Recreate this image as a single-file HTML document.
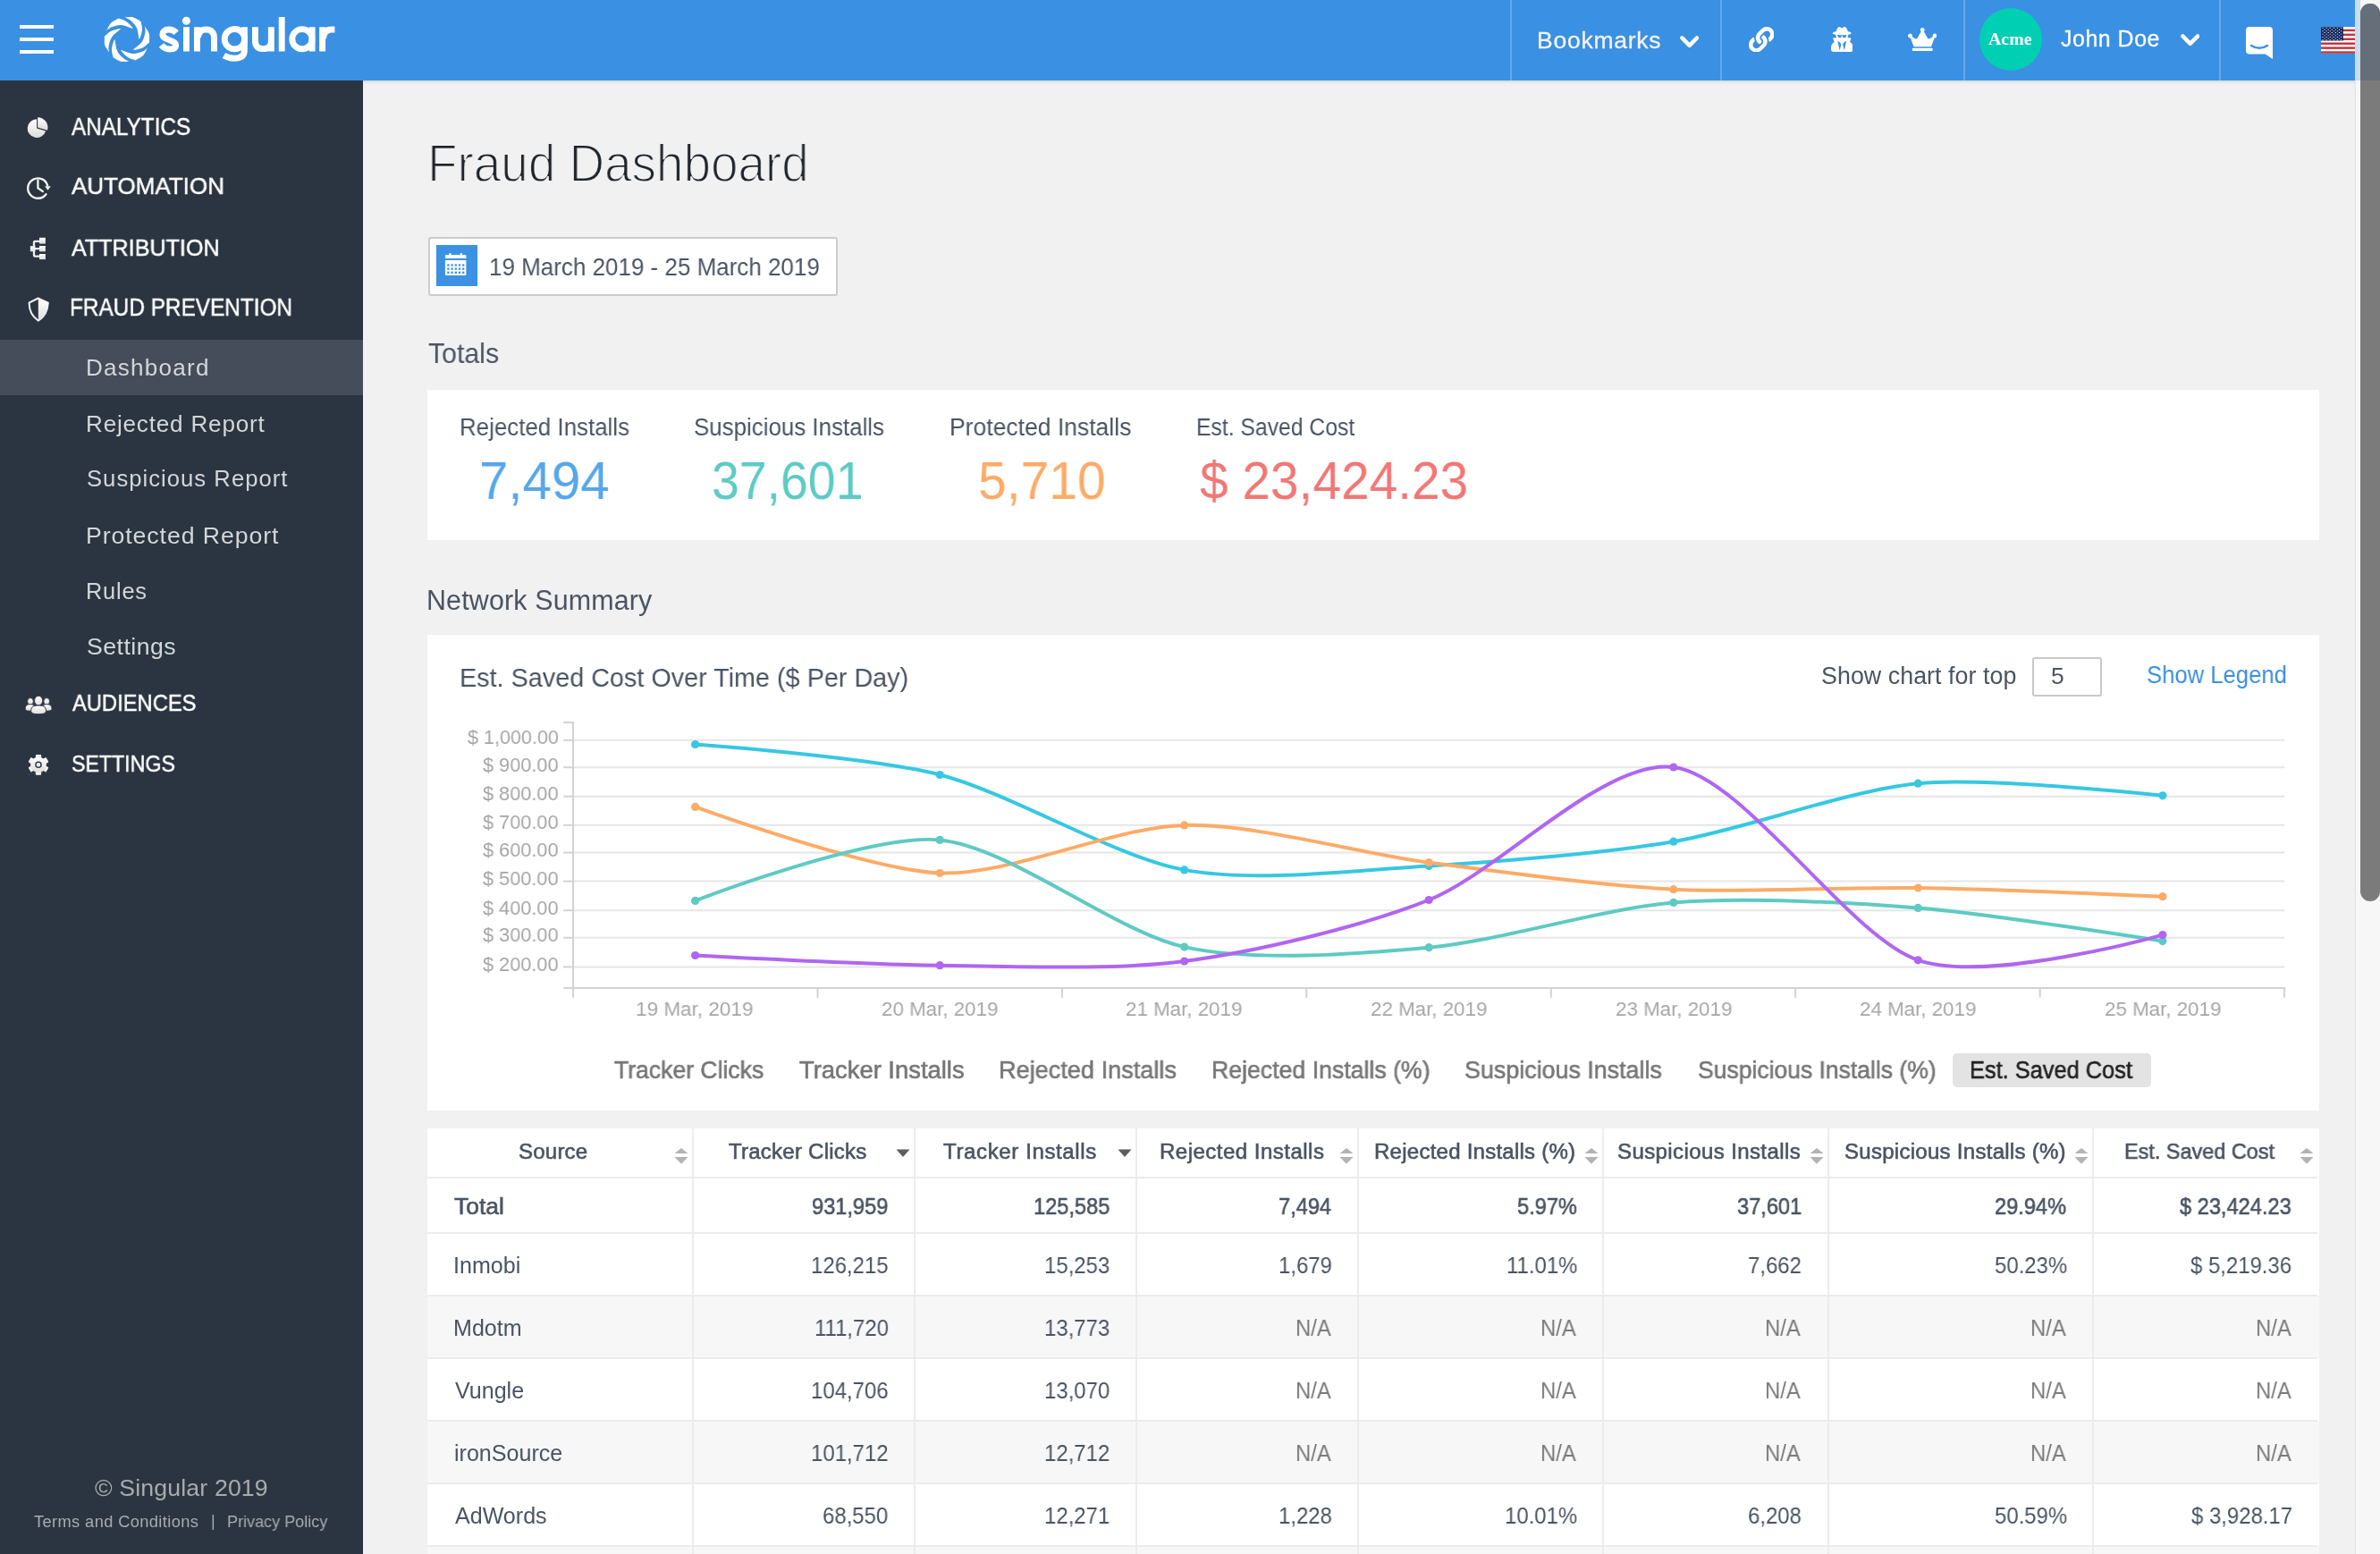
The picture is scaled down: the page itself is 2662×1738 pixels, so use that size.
<!DOCTYPE html>
<html><head><meta charset="utf-8"><title>Fraud Dashboard</title>
<style>
html,body{margin:0;padding:0}
body{width:2662px;height:1738px;overflow:hidden;position:relative;background:#f1f1f1;font-family:"Liberation Sans",sans-serif}
.abs{position:absolute}
.t{position:absolute;white-space:pre;line-height:normal;will-change:transform}
html{overflow:hidden}
</style></head><body>
<!-- header -->
<div class="abs" style="left:0;top:0;width:2634px;height:90px;background:#3a90e2"></div>
<div class="abs" style="left:0;top:90px;width:2634px;height:4px;background:linear-gradient(rgba(0,0,0,0.1),rgba(0,0,0,0))"></div>
<div class="abs" style="left:1689px;top:0;width:2px;height:90px;background:#67a9ea"></div>
<div class="abs" style="left:1924px;top:0;width:2px;height:90px;background:#67a9ea"></div>
<div class="abs" style="left:2196px;top:0;width:2px;height:90px;background:#67a9ea"></div>
<div class="abs" style="left:2482px;top:0;width:2px;height:90px;background:#67a9ea"></div>
<!-- sidebar -->
<div class="abs" style="left:0;top:90px;width:406px;height:1648px;background:#2a3541"></div>
<div class="abs" style="left:0;top:380px;width:406px;height:62px;background:#464d5a"></div>
<!-- date box -->
<div class="abs" style="left:479px;top:265px;width:454px;height:62px;background:#fff;border:2px solid #cccccc;border-radius:3px"></div>
<!-- totals card -->
<div class="abs" style="left:478px;top:436px;width:2116px;height:168px;background:#fff"></div>
<!-- chart card -->
<div class="abs" style="left:478px;top:710px;width:2116px;height:532px;background:#fff"></div>
<div class="abs" style="left:2273px;top:735px;width:74px;height:40px;border:2px solid #c8c8c8;border-radius:3px;background:#fff"></div>
<div class="abs" style="left:2184px;top:1178px;width:222px;height:37.5px;background:#e3e3e3;border-radius:5px"></div>
<svg width="2662" height="1738" style="position:absolute;left:0;top:0">
<line x1="641" y1="827.8" x2="2555.2" y2="827.8" stroke="#e6e6e6" stroke-width="2"/>
<line x1="630.2" y1="827.8" x2="641" y2="827.8" stroke="#d3d3d3" stroke-width="2"/>
<line x1="641" y1="858.2" x2="2555.2" y2="858.2" stroke="#e6e6e6" stroke-width="2"/>
<line x1="630.2" y1="858.2" x2="641" y2="858.2" stroke="#d3d3d3" stroke-width="2"/>
<line x1="641" y1="890.7" x2="2555.2" y2="890.7" stroke="#e6e6e6" stroke-width="2"/>
<line x1="630.2" y1="890.7" x2="641" y2="890.7" stroke="#d3d3d3" stroke-width="2"/>
<line x1="641" y1="922.8" x2="2555.2" y2="922.8" stroke="#e6e6e6" stroke-width="2"/>
<line x1="630.2" y1="922.8" x2="641" y2="922.8" stroke="#d3d3d3" stroke-width="2"/>
<line x1="641" y1="953.6" x2="2555.2" y2="953.6" stroke="#e6e6e6" stroke-width="2"/>
<line x1="630.2" y1="953.6" x2="641" y2="953.6" stroke="#d3d3d3" stroke-width="2"/>
<line x1="641" y1="985.6" x2="2555.2" y2="985.6" stroke="#e6e6e6" stroke-width="2"/>
<line x1="630.2" y1="985.6" x2="641" y2="985.6" stroke="#d3d3d3" stroke-width="2"/>
<line x1="641" y1="1018.2" x2="2555.2" y2="1018.2" stroke="#e6e6e6" stroke-width="2"/>
<line x1="630.2" y1="1018.2" x2="641" y2="1018.2" stroke="#d3d3d3" stroke-width="2"/>
<line x1="641" y1="1048.8" x2="2555.2" y2="1048.8" stroke="#e6e6e6" stroke-width="2"/>
<line x1="630.2" y1="1048.8" x2="641" y2="1048.8" stroke="#d3d3d3" stroke-width="2"/>
<line x1="641" y1="1081.4" x2="2555.2" y2="1081.4" stroke="#e6e6e6" stroke-width="2"/>
<line x1="630.2" y1="1081.4" x2="641" y2="1081.4" stroke="#d3d3d3" stroke-width="2"/>
<line x1="630.2" y1="808" x2="642" y2="808" stroke="#d3d3d3" stroke-width="2"/>
<line x1="641" y1="807" x2="641" y2="1115.8" stroke="#d3d3d3" stroke-width="2"/>
<line x1="630.2" y1="1104.9" x2="2556.2" y2="1104.9" stroke="#d3d3d3" stroke-width="2"/>
<line x1="914.5" y1="1104.9" x2="914.5" y2="1115.8" stroke="#d3d3d3" stroke-width="2"/>
<line x1="1187.9" y1="1104.9" x2="1187.9" y2="1115.8" stroke="#d3d3d3" stroke-width="2"/>
<line x1="1461.3" y1="1104.9" x2="1461.3" y2="1115.8" stroke="#d3d3d3" stroke-width="2"/>
<line x1="1734.8" y1="1104.9" x2="1734.8" y2="1115.8" stroke="#d3d3d3" stroke-width="2"/>
<line x1="2008.2" y1="1104.9" x2="2008.2" y2="1115.8" stroke="#d3d3d3" stroke-width="2"/>
<line x1="2281.7" y1="1104.9" x2="2281.7" y2="1115.8" stroke="#d3d3d3" stroke-width="2"/>
<line x1="2555.1" y1="1104.9" x2="2555.1" y2="1115.8" stroke="#d3d3d3" stroke-width="2"/>
<path d="M 777.60 832.50 C 777.60 832.50 972.99 846.44 1051.15 866.50 C 1129.31 886.56 1246.54 958.33 1324.70 972.90 C 1402.86 987.47 1520.09 973.03 1598.25 968.50 C 1676.41 963.97 1793.64 954.39 1871.80 941.20 C 1949.96 928.01 2067.19 883.54 2145.35 876.20 C 2223.51 868.86 2418.90 889.80 2418.90 889.80" fill="none" stroke="#36c8e2" stroke-width="4" stroke-linecap="round" stroke-linejoin="round"/>
<path d="M 777.60 902.40 C 777.60 902.40 972.99 973.57 1051.15 976.50 C 1129.31 979.43 1246.54 924.59 1324.70 922.90 C 1402.86 921.21 1520.09 954.44 1598.25 964.70 C 1676.41 974.96 1793.64 990.66 1871.80 994.70 C 1949.96 998.74 2067.19 991.86 2145.35 993.00 C 2223.51 994.14 2418.90 1002.70 2418.90 1002.70" fill="none" stroke="#fdab66" stroke-width="4" stroke-linecap="round" stroke-linejoin="round"/>
<path d="M 777.60 1007.40 C 777.60 1007.40 972.99 932.01 1051.15 939.40 C 1129.31 946.79 1246.54 1041.91 1324.70 1059.10 C 1402.86 1076.29 1520.09 1066.80 1598.25 1059.70 C 1676.41 1052.60 1793.64 1015.73 1871.80 1009.40 C 1949.96 1003.07 2067.19 1009.23 2145.35 1015.40 C 2223.51 1021.57 2418.90 1052.60 2418.90 1052.60" fill="none" stroke="#5ecac3" stroke-width="4" stroke-linecap="round" stroke-linejoin="round"/>
<path d="M 777.60 1068.50 C 777.60 1068.50 972.99 1078.77 1051.15 1079.70 C 1129.31 1080.63 1246.54 1085.46 1324.70 1075.00 C 1402.86 1064.54 1520.09 1037.50 1598.25 1006.50 C 1676.41 975.50 1793.64 848.39 1871.80 858.00 C 1949.96 867.61 2067.19 1047.00 2145.35 1073.80 C 2223.51 1100.60 2418.90 1045.60 2418.90 1045.60" fill="none" stroke="#b066f1" stroke-width="4" stroke-linecap="round" stroke-linejoin="round"/>
<circle cx="777.6" cy="832.5" r="4.6" fill="#36c8e2"/>
<circle cx="1051.2" cy="866.5" r="4.6" fill="#36c8e2"/>
<circle cx="1324.7" cy="972.9" r="4.6" fill="#36c8e2"/>
<circle cx="1598.2" cy="968.5" r="4.6" fill="#36c8e2"/>
<circle cx="1871.8" cy="941.2" r="4.6" fill="#36c8e2"/>
<circle cx="2145.3" cy="876.2" r="4.6" fill="#36c8e2"/>
<circle cx="2418.9" cy="889.8" r="4.6" fill="#36c8e2"/>
<circle cx="777.6" cy="902.4" r="4.6" fill="#fdab66"/>
<circle cx="1051.2" cy="976.5" r="4.6" fill="#fdab66"/>
<circle cx="1324.7" cy="922.9" r="4.6" fill="#fdab66"/>
<circle cx="1598.2" cy="964.7" r="4.6" fill="#fdab66"/>
<circle cx="1871.8" cy="994.7" r="4.6" fill="#fdab66"/>
<circle cx="2145.3" cy="993.0" r="4.6" fill="#fdab66"/>
<circle cx="2418.9" cy="1002.7" r="4.6" fill="#fdab66"/>
<circle cx="777.6" cy="1007.4" r="4.6" fill="#5ecac3"/>
<circle cx="1051.2" cy="939.4" r="4.6" fill="#5ecac3"/>
<circle cx="1324.7" cy="1059.1" r="4.6" fill="#5ecac3"/>
<circle cx="1598.2" cy="1059.7" r="4.6" fill="#5ecac3"/>
<circle cx="1871.8" cy="1009.4" r="4.6" fill="#5ecac3"/>
<circle cx="2145.3" cy="1015.4" r="4.6" fill="#5ecac3"/>
<circle cx="2418.9" cy="1052.6" r="4.6" fill="#5ecac3"/>
<circle cx="777.6" cy="1068.5" r="4.6" fill="#b066f1"/>
<circle cx="1051.2" cy="1079.7" r="4.6" fill="#b066f1"/>
<circle cx="1324.7" cy="1075.0" r="4.6" fill="#b066f1"/>
<circle cx="1598.2" cy="1006.5" r="4.6" fill="#b066f1"/>
<circle cx="1871.8" cy="858.0" r="4.6" fill="#b066f1"/>
<circle cx="2145.3" cy="1073.8" r="4.6" fill="#b066f1"/>
<circle cx="2418.9" cy="1045.6" r="4.6" fill="#b066f1"/>
</svg>
<div class="abs" style="left:478px;top:1262px;width:2116px;height:476px;background:#fff"></div>
<div class="abs" style="left:478px;top:1449px;width:2116px;height:70px;background:#f7f7f7"></div>
<div class="abs" style="left:478px;top:1589px;width:2116px;height:70px;background:#f7f7f7"></div>
<div class="abs" style="left:478px;top:1729px;width:2116px;height:70px;background:#f7f7f7"></div>
<div class="abs" style="left:478px;top:1316px;width:2114px;height:2px;background:#ececec"></div>
<div class="abs" style="left:478px;top:1378px;width:2114px;height:2px;background:#ececec"></div>
<div class="abs" style="left:478px;top:1448px;width:2114px;height:2px;background:#ececec"></div>
<div class="abs" style="left:478px;top:1518px;width:2114px;height:2px;background:#ececec"></div>
<div class="abs" style="left:478px;top:1588px;width:2114px;height:2px;background:#ececec"></div>
<div class="abs" style="left:478px;top:1658px;width:2114px;height:2px;background:#ececec"></div>
<div class="abs" style="left:478px;top:1728px;width:2114px;height:2px;background:#ececec"></div>
<div class="abs" style="left:773.6px;top:1262px;width:2px;height:476px;background:#ececec"></div>
<div class="abs" style="left:1021.9px;top:1262px;width:2px;height:476px;background:#ececec"></div>
<div class="abs" style="left:1269.9px;top:1262px;width:2px;height:476px;background:#ececec"></div>
<div class="abs" style="left:1518.3px;top:1262px;width:2px;height:476px;background:#ececec"></div>
<div class="abs" style="left:1792.3px;top:1262px;width:2px;height:476px;background:#ececec"></div>
<div class="abs" style="left:2044.0px;top:1262px;width:2px;height:476px;background:#ececec"></div>
<div class="abs" style="left:2339.8px;top:1262px;width:2px;height:476px;background:#ececec"></div>
<svg class="abs" style="left:754px;top:1284px" width="16" height="18"><path d="M8,0 L15.5,6 L0.5,6 Z M0.5,10 L15.5,10 L8,17.8 Z" fill="#b3b3b3"/></svg>
<svg class="abs" style="left:1002px;top:1284px" width="16" height="18"><path d="M0.5,1.5 L15.5,1.5 L8,10 Z" fill="#5d5d5d"/></svg>
<svg class="abs" style="left:1250px;top:1284px" width="16" height="18"><path d="M0.5,1.5 L15.5,1.5 L8,10 Z" fill="#5d5d5d"/></svg>
<svg class="abs" style="left:1498px;top:1284px" width="16" height="18"><path d="M8,0 L15.5,6 L0.5,6 Z M0.5,10 L15.5,10 L8,17.8 Z" fill="#b3b3b3"/></svg>
<svg class="abs" style="left:1772px;top:1284px" width="16" height="18"><path d="M8,0 L15.5,6 L0.5,6 Z M0.5,10 L15.5,10 L8,17.8 Z" fill="#b3b3b3"/></svg>
<svg class="abs" style="left:2024px;top:1284px" width="16" height="18"><path d="M8,0 L15.5,6 L0.5,6 Z M0.5,10 L15.5,10 L8,17.8 Z" fill="#b3b3b3"/></svg>
<svg class="abs" style="left:2320px;top:1284px" width="16" height="18"><path d="M8,0 L15.5,6 L0.5,6 Z M0.5,10 L15.5,10 L8,17.8 Z" fill="#b3b3b3"/></svg>
<svg class="abs" style="left:2572px;top:1284px" width="16" height="18"><path d="M8,0 L15.5,6 L0.5,6 Z M0.5,10 L15.5,10 L8,17.8 Z" fill="#b3b3b3"/></svg>

<svg class="abs" style="left:488px;top:274px" width="46" height="46" viewBox="488 274 46 46">
 <rect x="488" y="274" width="46" height="46" fill="#3b91e3"/>
 <path d="M499,285 L502.2,285 L502.2,283.5 Q503.4,282.3 504.6,283.5 L504.6,285 L514.7,285 L514.7,283.5 Q515.9,282.3 517.1,283.5 L517.1,285 L520.4,285 Q521.4,285 521.4,286 L521.4,289 L497.9,289 L497.9,286 Q497.9,285 499,285 Z" fill="#fff"/>
 <path d="M497.9,291 L521.4,291 L521.4,307 Q521.4,308 520.4,308 L499,308 Q497.9,308 497.9,307 Z" fill="#fff"/>
 <rect x="500.25" y="295.35" width="2.3" height="2.3" fill="#3b91e3"/><rect x="504.45" y="295.35" width="2.3" height="2.3" fill="#3b91e3"/><rect x="508.65" y="295.35" width="2.3" height="2.3" fill="#3b91e3"/><rect x="512.85" y="295.35" width="2.3" height="2.3" fill="#3b91e3"/><rect x="517.05" y="295.35" width="2.3" height="2.3" fill="#3b91e3"/><rect x="500.25" y="299.50" width="2.3" height="2.3" fill="#3b91e3"/><rect x="504.45" y="299.50" width="2.3" height="2.3" fill="#3b91e3"/><rect x="508.65" y="299.50" width="2.3" height="2.3" fill="#3b91e3"/><rect x="512.85" y="299.50" width="2.3" height="2.3" fill="#3b91e3"/><rect x="517.05" y="299.50" width="2.3" height="2.3" fill="#3b91e3"/><rect x="500.25" y="303.65" width="2.3" height="2.3" fill="#3b91e3"/><rect x="504.45" y="303.65" width="2.3" height="2.3" fill="#3b91e3"/><rect x="508.65" y="303.65" width="2.3" height="2.3" fill="#3b91e3"/><rect x="512.85" y="303.65" width="2.3" height="2.3" fill="#3b91e3"/><rect x="517.05" y="303.65" width="2.3" height="2.3" fill="#3b91e3"/>
</svg>


<!-- hamburger -->
<div class="abs" style="left:22px;top:28px;width:38px;height:4px;background:#fff"></div>
<div class="abs" style="left:22px;top:42px;width:38px;height:4px;background:#fff"></div>
<div class="abs" style="left:22px;top:56px;width:38px;height:4px;background:#fff"></div>
<svg width="60" height="60" viewBox="-30 -30 60 60" style="position:absolute;left:112.2px;top:13.9px"><path d="M-3.01,-24.52 C-1.40,-24.55 3.53,-25.49 6.63,-24.73 C9.72,-23.96 14.08,-20.74 15.58,-19.94 C15.81,-18.50 17.06,-14.10 16.99,-11.29 C16.93,-8.48 15.77,-4.97 15.19,-3.09 C14.61,-1.21 13.78,-0.52 13.50,-0.00 C13.02,-2.23 12.41,-9.73 10.62,-13.40 C8.84,-17.07 5.05,-20.17 2.78,-22.02 C0.51,-23.88 -2.04,-24.10 -3.01,-24.52 Z" fill="#fff" transform="rotate(0)"/><path d="M-3.01,-24.52 C-1.40,-24.55 3.53,-25.49 6.63,-24.73 C9.72,-23.96 14.08,-20.74 15.58,-19.94 C15.81,-18.50 17.06,-14.10 16.99,-11.29 C16.93,-8.48 15.77,-4.97 15.19,-3.09 C14.61,-1.21 13.78,-0.52 13.50,-0.00 C13.02,-2.23 12.41,-9.73 10.62,-13.40 C8.84,-17.07 5.05,-20.17 2.78,-22.02 C0.51,-23.88 -2.04,-24.10 -3.01,-24.52 Z" fill="#fff" transform="rotate(-60)"/><path d="M-3.01,-24.52 C-1.40,-24.55 3.53,-25.49 6.63,-24.73 C9.72,-23.96 14.08,-20.74 15.58,-19.94 C15.81,-18.50 17.06,-14.10 16.99,-11.29 C16.93,-8.48 15.77,-4.97 15.19,-3.09 C14.61,-1.21 13.78,-0.52 13.50,-0.00 C13.02,-2.23 12.41,-9.73 10.62,-13.40 C8.84,-17.07 5.05,-20.17 2.78,-22.02 C0.51,-23.88 -2.04,-24.10 -3.01,-24.52 Z" fill="#fff" transform="rotate(-120)"/><path d="M-3.01,-24.52 C-1.40,-24.55 3.53,-25.49 6.63,-24.73 C9.72,-23.96 14.08,-20.74 15.58,-19.94 C15.81,-18.50 17.06,-14.10 16.99,-11.29 C16.93,-8.48 15.77,-4.97 15.19,-3.09 C14.61,-1.21 13.78,-0.52 13.50,-0.00 C13.02,-2.23 12.41,-9.73 10.62,-13.40 C8.84,-17.07 5.05,-20.17 2.78,-22.02 C0.51,-23.88 -2.04,-24.10 -3.01,-24.52 Z" fill="#fff" transform="rotate(-180)"/><path d="M-3.01,-24.52 C-1.40,-24.55 3.53,-25.49 6.63,-24.73 C9.72,-23.96 14.08,-20.74 15.58,-19.94 C15.81,-18.50 17.06,-14.10 16.99,-11.29 C16.93,-8.48 15.77,-4.97 15.19,-3.09 C14.61,-1.21 13.78,-0.52 13.50,-0.00 C13.02,-2.23 12.41,-9.73 10.62,-13.40 C8.84,-17.07 5.05,-20.17 2.78,-22.02 C0.51,-23.88 -2.04,-24.10 -3.01,-24.52 Z" fill="#fff" transform="rotate(-240)"/><path d="M-3.01,-24.52 C-1.40,-24.55 3.53,-25.49 6.63,-24.73 C9.72,-23.96 14.08,-20.74 15.58,-19.94 C15.81,-18.50 17.06,-14.10 16.99,-11.29 C16.93,-8.48 15.77,-4.97 15.19,-3.09 C14.61,-1.21 13.78,-0.52 13.50,-0.00 C13.02,-2.23 12.41,-9.73 10.62,-13.40 C8.84,-17.07 5.05,-20.17 2.78,-22.02 C0.51,-23.88 -2.04,-24.10 -3.01,-24.52 Z" fill="#fff" transform="rotate(-300)"/></svg>
<svg class="abs" style="left:170px;top:10px" width="215" height="65" viewBox="170 10 215 65">
 <g fill="none" stroke="#fff" stroke-width="6.9" stroke-linecap="butt">
  <path d="M197.2,36.8 C194.8,34 191.8,33 188.6,33 C184.3,33 181.9,35.4 181.9,38.4 C181.9,41.8 184.8,43 189,44.6 C194,46.5 196.6,47.8 196.6,51 C196.6,54 193.6,55 189.6,55 C185.8,55 182.8,53.4 180.4,50.6"/>
  <path d="M208.45,30.2 L208.45,57.5"/>
  <path d="M220.45,30.2 L220.45,57.5 M221.5,42 C222,36 225,33 230.3,33 C235.8,33 239.5,36 239.5,42 L239.5,57.5"/>
  <circle cx="262.4" cy="43.7" r="11.2"/>
  <path d="M273.4,30.2 L273.4,56 C273.4,62.8 268.8,65.2 262.2,65.2 C257.4,65.2 253.6,64 250.4,62"/>
  <path d="M285.45,30.2 L285.45,46 C285.45,52 289,54.65 294.4,54.65 C299.8,54.65 303.35,52 303.35,46 L303.35,30.2 M303.35,40 L303.35,57.5"/>
  <path d="M315.2,19 L315.2,57.5"/>
  <circle cx="337.9" cy="43.7" r="11.1"/>
  <path d="M349.1,30.2 L349.1,57.5"/>
  <path d="M360.6,30.2 L360.6,57.5 M361.5,43 C362,36.2 365,33 370.8,33 L374.4,33"/>
 </g>
 <circle cx="208.4" cy="23.3" r="4.5" fill="#fff"/>
</svg>

<svg class="abs" style="left:1878.8px;top:39.8px" width="21.4" height="13.3" viewBox="0 0 21.4 13.3"><polyline points="2.5,2.5 10.7,10.8 18.9,2.5" fill="none" stroke="#fff" stroke-width="4.6" stroke-linecap="round" stroke-linejoin="round"/></svg>
<svg class="abs" style="left:2438.7px;top:37.7px" width="21.5" height="13.3" viewBox="0 0 21.5 13.3"><polyline points="2.5,2.5 10.75,10.8 19.0,2.5" fill="none" stroke="#fff" stroke-width="4.6" stroke-linecap="round" stroke-linejoin="round"/></svg>
<!-- link -->
<svg class="abs" style="left:1955.5px;top:29.7px" width="28.6" height="28.6" viewBox="0 0 512 512">
 <path fill="#fff" d="M326.612 185.391c59.747 59.809 58.927 155.698.36 214.59-.11.12-.24.25-.36.37l-67.2 67.2c-59.27 59.27-155.699 59.262-214.96 0-59.27-59.26-59.27-155.7 0-214.96l37.106-37.106c9.84-9.84 26.786-3.3 27.294 10.606.648 17.722 3.826 35.527 9.69 52.721 1.986 5.822.567 12.262-3.783 16.612l-13.087 13.087c-28.026 28.026-28.905 73.66-1.155 101.96 28.024 28.579 74.086 28.749 102.325.51l67.2-67.19c28.191-28.191 28.073-73.757 0-101.83-3.701-3.694-7.429-6.564-10.341-8.569a16.037 16.037 0 0 1-6.947-12.606c-.396-10.567 3.348-21.456 11.698-29.806l21.054-21.055c5.521-5.521 14.182-6.199 20.584-1.731a152.482 152.482 0 0 1 20.522 17.197zM467.547 44.449c-59.261-59.262-155.69-59.27-214.96 0l-67.2 67.2c-.12.12-.25.25-.36.37-58.566 58.892-59.387 154.781.36 214.59a152.454 152.454 0 0 0 20.521 17.196c6.402 4.468 15.064 3.789 20.584-1.731l21.054-21.055c8.35-8.35 12.094-19.239 11.698-29.806a16.037 16.037 0 0 0-6.947-12.606c-2.912-2.005-6.64-4.875-10.341-8.569-28.073-28.073-28.191-73.639 0-101.83l67.2-67.19c28.239-28.239 74.3-28.069 102.325.51 27.75 28.3 26.872 73.934-1.155 101.96l-13.087 13.087c-4.35 4.35-5.769 10.79-3.783 16.612 5.864 17.194 9.042 34.999 9.69 52.721.509 13.906 17.454 20.446 27.294 10.606l37.106-37.106c59.271-59.26 59.271-155.699.001-214.959z"/>
</svg>
<!-- spy -->
<svg class="abs" style="left:2047.7px;top:29.9px" width="24.5" height="28" viewBox="0 0 448 512">
 <path fill="#fff" d="M383.9 308.3l23.9-62.6c4-10.5-3.7-21.7-15-21.7h-58.5c11-18.9 17.8-40.6 17.8-64v-.3c39.2-7.8 64-19.1 64-31.7 0-13.3-27.3-25.1-70.1-33-9.2-32.8-27-65.8-40.6-82.8-9.5-11.9-25.9-15.6-39.5-8.8l-27.6 13.8c-9 4.5-19.6 4.5-28.6 0L182.1 3.4c-13.6-6.8-30-3.1-39.5 8.8-13.5 17-31.4 50-40.6 82.8-42.7 7.9-70 19.7-70 33 0 12.6 24.8 23.9 64 31.7v.3c0 23.4 6.8 45.1 17.8 64H56.3c-11.5 0-19.2 11.7-14.7 22.3l25.8 60.2C27.3 329.8 0 372.7 0 422.4v44.8C0 491.9 20.1 512 44.8 512h358.4c24.7 0 44.8-20.1 44.8-44.8v-44.8c0-48.4-25.8-90.4-64.1-114.1zM176 480l-41.6-192 49.6 32 24 40-32 120zm96 0l-32-120 24-40 49.6-32L272 480zm41.7-298.5c-3.9 11.9-7 24.6-16.5 33.4-10.1 9.3-48 22.4-64-25-2.8-8.4-15.4-8.4-18.3 0-17 50.2-56 32.4-64 25-9.5-8.8-12.7-21.5-16.5-33.4-.8-2.5-6.3-5.7-6.3-5.8v-10.8c28.3 3.6 61 5.8 96 5.8s67.7-2.1 96-5.8v10.8c-.1.1-5.6 3.2-6.4 5.8z"/>
</svg>
<!-- crown -->
<svg class="abs" style="left:2133.8px;top:30.7px" width="32.5" height="26" viewBox="0 0 640 512">
 <path fill="#fff" d="M528 448H112c-8.8 0-16 7.2-16 16v32c0 8.8 7.2 16 16 16h416c8.8 0 16-7.2 16-16v-32c0-8.8-7.2-16-16-16zm64-320c-26.5 0-48 21.5-48 48 0 7.1 1.6 13.7 4.4 19.8L476 239.2c-15.4 9.2-35.3 4-44.2-11.6L350.3 85C361 76.2 368 63 368 48c0-26.5-21.5-48-48-48s-48 21.5-48 48c0 15 7 28.2 17.7 37l-81.5 142.6c-8.9 15.6-28.9 20.8-44.2 11.6l-72.3-43.4c2.7-6 4.4-12.7 4.4-19.8 0-26.5-21.5-48-48-48S0 149.5 0 176s21.5 48 48 48c2.6 0 5.2-.4 7.7-.8L128 416h384l72.3-192.8c2.5.4 5.1.8 7.7.8 26.5 0 48-21.5 48-48s-21.5-48-48-48z"/>
</svg>
<!-- avatar -->
<div class="abs" style="left:2214px;top:8.8px;width:70px;height:70px;border-radius:50%;background:#00cfb4"></div>
<!-- chat -->
<svg class="abs" style="left:2500px;top:20px" width="50" height="50" viewBox="2500 20 50 50">
 <path d="M2516,29.9 L2538,29.9 Q2542,29.9 2542,33.9 L2542,66 L2533.6,60.5 L2516,60.5 Q2512,60.5 2512,56.5 L2512,33.9 Q2512,29.9 2516,29.9 Z" fill="#fff"/>
 <path d="M2518,51 Q2527,56.5 2536,51" fill="none" stroke="#3a90e2" stroke-width="2.6" stroke-linecap="round"/>
</svg>
<!-- flag -->
<svg class="abs" style="left:2596px;top:30px" width="46" height="30" viewBox="2596 30 46 30">
 <rect x="2596" y="30.2" width="46" height="29.6" fill="#fff"/>
 <rect x="2596" y="32.67" width="46" height="2.467" fill="#c1363f"/><rect x="2596" y="37.60" width="46" height="2.467" fill="#c1363f"/><rect x="2596" y="42.53" width="46" height="2.467" fill="#c1363f"/><rect x="2596" y="47.47" width="46" height="2.467" fill="#c1363f"/><rect x="2596" y="52.40" width="46" height="2.467" fill="#c1363f"/><rect x="2596" y="57.34" width="46" height="2.467" fill="#c1363f"/>
 <rect x="2596" y="30.2" width="24.8" height="15.3" fill="#10245a"/>
 <circle cx="2598.00" cy="31.50" r="0.62" fill="#fff"/><circle cx="2602.10" cy="31.50" r="0.62" fill="#fff"/><circle cx="2606.20" cy="31.50" r="0.62" fill="#fff"/><circle cx="2610.30" cy="31.50" r="0.62" fill="#fff"/><circle cx="2614.40" cy="31.50" r="0.62" fill="#fff"/><circle cx="2618.50" cy="31.50" r="0.62" fill="#fff"/><circle cx="2600.05" cy="33.15" r="0.62" fill="#fff"/><circle cx="2604.15" cy="33.15" r="0.62" fill="#fff"/><circle cx="2608.25" cy="33.15" r="0.62" fill="#fff"/><circle cx="2612.35" cy="33.15" r="0.62" fill="#fff"/><circle cx="2616.45" cy="33.15" r="0.62" fill="#fff"/><circle cx="2598.00" cy="34.80" r="0.62" fill="#fff"/><circle cx="2602.10" cy="34.80" r="0.62" fill="#fff"/><circle cx="2606.20" cy="34.80" r="0.62" fill="#fff"/><circle cx="2610.30" cy="34.80" r="0.62" fill="#fff"/><circle cx="2614.40" cy="34.80" r="0.62" fill="#fff"/><circle cx="2618.50" cy="34.80" r="0.62" fill="#fff"/><circle cx="2600.05" cy="36.45" r="0.62" fill="#fff"/><circle cx="2604.15" cy="36.45" r="0.62" fill="#fff"/><circle cx="2608.25" cy="36.45" r="0.62" fill="#fff"/><circle cx="2612.35" cy="36.45" r="0.62" fill="#fff"/><circle cx="2616.45" cy="36.45" r="0.62" fill="#fff"/><circle cx="2598.00" cy="38.10" r="0.62" fill="#fff"/><circle cx="2602.10" cy="38.10" r="0.62" fill="#fff"/><circle cx="2606.20" cy="38.10" r="0.62" fill="#fff"/><circle cx="2610.30" cy="38.10" r="0.62" fill="#fff"/><circle cx="2614.40" cy="38.10" r="0.62" fill="#fff"/><circle cx="2618.50" cy="38.10" r="0.62" fill="#fff"/><circle cx="2600.05" cy="39.75" r="0.62" fill="#fff"/><circle cx="2604.15" cy="39.75" r="0.62" fill="#fff"/><circle cx="2608.25" cy="39.75" r="0.62" fill="#fff"/><circle cx="2612.35" cy="39.75" r="0.62" fill="#fff"/><circle cx="2616.45" cy="39.75" r="0.62" fill="#fff"/><circle cx="2598.00" cy="41.40" r="0.62" fill="#fff"/><circle cx="2602.10" cy="41.40" r="0.62" fill="#fff"/><circle cx="2606.20" cy="41.40" r="0.62" fill="#fff"/><circle cx="2610.30" cy="41.40" r="0.62" fill="#fff"/><circle cx="2614.40" cy="41.40" r="0.62" fill="#fff"/><circle cx="2618.50" cy="41.40" r="0.62" fill="#fff"/><circle cx="2600.05" cy="43.05" r="0.62" fill="#fff"/><circle cx="2604.15" cy="43.05" r="0.62" fill="#fff"/><circle cx="2608.25" cy="43.05" r="0.62" fill="#fff"/><circle cx="2612.35" cy="43.05" r="0.62" fill="#fff"/><circle cx="2616.45" cy="43.05" r="0.62" fill="#fff"/><circle cx="2598.00" cy="44.70" r="0.62" fill="#fff"/><circle cx="2602.10" cy="44.70" r="0.62" fill="#fff"/><circle cx="2606.20" cy="44.70" r="0.62" fill="#fff"/><circle cx="2610.30" cy="44.70" r="0.62" fill="#fff"/><circle cx="2614.40" cy="44.70" r="0.62" fill="#fff"/><circle cx="2618.50" cy="44.70" r="0.62" fill="#fff"/>
</svg>


<svg class="abs" style="left:0;top:90px" width="406" height="800" viewBox="0 90 406 800">
 <defs>
  <linearGradient id="ig" x1="0" y1="0" x2="0" y2="1"><stop offset="0" stop-color="#ffffff"/><stop offset="1" stop-color="#dcdcdc"/></linearGradient>
 </defs>
 <!-- pie -->
 <path d="M41.1,143.6 L51.10,146.47 A10.4,10.4 0 1 1 41.1,133.2 Z" fill="url(#ig)"/>
 <path d="M42.2,142.6 L42.2,131.29999999999998 A11.3,11.3 0 0 1 53.06,145.71 Z" fill="url(#ig)"/>
 <!-- clock -->
 <path d="M53.11,207.33 A11.2,11.2 0 1 0 51.46,217.18" fill="none" stroke="#f2f2f2" stroke-width="2.4" stroke-linecap="round"/>
 <path d="M50.1,208.3 L56.8,208.3 L53.5,212.8 Z" fill="#f2f2f2"/>
 <path d="M42.4,201.6 L42.4,210.4 L47.8,214" fill="none" stroke="#f2f2f2" stroke-width="2.3" stroke-linecap="round" stroke-linejoin="round"/>
 <!-- tree -->
 <g fill="url(#ig)">
  <rect x="33.8" y="275.2" width="5.6" height="6.1"/>
  <rect x="44" y="265.8" width="6.9" height="6.8"/>
  <rect x="44" y="275" width="6.9" height="6.3"/>
  <rect x="44" y="284" width="6.9" height="6.1"/>
 </g>
 <path d="M44.5,269.9 L39.2,269.9 Q38,269.9 38,271.1 L38,285.4 Q38,286.6 39.2,286.6 L44.5,286.6 M38,278.2 L44.5,278.2" fill="none" stroke="#efefef" stroke-width="2.3"/>
 <!-- shield -->
 <path d="M42.8,333.5 L32.6,338.6 Q32.6,352 42.8,358.6 Q53.2,352 53.8,338.6 Z" fill="none" stroke="#f2f2f2" stroke-width="2"/>
 <path d="M42.8,333.5 L53.8,338.6 Q53.2,352 42.8,358.6 Z" fill="url(#ig)"/>
 <!-- audiences -->
 <g fill="url(#ig)" stroke="#29343f" stroke-width="1">
  <ellipse cx="34" cy="784.4" rx="3.4" ry="3.9"/>
  <path d="M28.1,793 Q28.1,787.6 33.5,787.6 L35,787.6 Q38.6,788 39.4,791 L38.6,795 Q28.1,796 28.1,793 Z"/>
  <ellipse cx="52.2" cy="784.4" rx="3.4" ry="3.9"/>
  <path d="M58.1,793 Q58.1,787.6 52.7,787.6 L51.2,787.6 Q47.6,788 46.8,791 L47.6,795 Q58.1,796 58.1,793 Z"/>
  <ellipse cx="43.1" cy="783.6" rx="4.6" ry="5.4"/>
  <path d="M34.6,795.2 Q34.6,789 41.5,789 L44.7,789 Q51.6,789 51.6,795.2 Q51.6,798.8 43.1,798.8 Q34.6,798.8 34.6,795.2 Z"/>
 </g>
 <!-- gear -->
 <g transform="translate(43,855.3)">
  <g fill="url(#ig)">
   <rect x="-3.1" y="-11.4" width="6.2" height="5" rx="0.8" transform="rotate(0)"/><rect x="-3.1" y="-11.4" width="6.2" height="5" rx="0.8" transform="rotate(60)"/><rect x="-3.1" y="-11.4" width="6.2" height="5" rx="0.8" transform="rotate(120)"/><rect x="-3.1" y="-11.4" width="6.2" height="5" rx="0.8" transform="rotate(180)"/><rect x="-3.1" y="-11.4" width="6.2" height="5" rx="0.8" transform="rotate(240)"/><rect x="-3.1" y="-11.4" width="6.2" height="5" rx="0.8" transform="rotate(300)"/>
   <circle r="8.9"/>
  </g>
  <circle r="3.1" fill="none" stroke="#29343f" stroke-width="1.4"/>
 </g>
</svg>

<div class="t" style="left:1719.40px;top:29.66px;font-size:26.52px;color:#f6f2ee;letter-spacing:0.74px;-webkit-text-stroke:0.3px #f6f2ee;">Bookmarks</div>
<div class="t" style="left:2305.00px;top:28.82px;font-size:24.93px;color:#ffffff;letter-spacing:0.53px;-webkit-text-stroke:0.3px #ffffff;">John Doe</div>
<div class="t" style="left:2224.10px;top:31.71px;font-size:19.85px;color:#ffffff;font-family:'Liberation Serif',serif;font-weight:700;transform:scaleX(0.9979);transform-origin:0 0;">Acme</div>
<div class="t" style="left:80.00px;top:125.72px;font-size:27.1px;color:#ffffff;-webkit-text-stroke:0.45px #ffffff;transform:scaleX(0.8959);transform-origin:0 0;">ANALYTICS</div>
<div class="t" style="left:80.00px;top:193.42px;font-size:26.67px;color:#ffffff;-webkit-text-stroke:0.45px #ffffff;transform:scaleX(0.9753);transform-origin:0 0;">AUTOMATION</div>
<div class="t" style="left:80.00px;top:261.82px;font-size:26.67px;color:#ffffff;-webkit-text-stroke:0.45px #ffffff;transform:scaleX(0.9425);transform-origin:0 0;">ATTRIBUTION</div>
<div class="t" style="left:78.18px;top:329.29px;font-size:26.81px;color:#ffffff;-webkit-text-stroke:0.45px #ffffff;transform:scaleX(0.9093);transform-origin:0 0;">FRAUD PREVENTION</div>
<div class="t" style="left:80.50px;top:772.06px;font-size:25.65px;color:#ffffff;-webkit-text-stroke:0.45px #ffffff;transform:scaleX(0.9255);transform-origin:0 0;">AUDIENCES</div>
<div class="t" style="left:79.63px;top:839.22px;font-size:26.67px;color:#ffffff;-webkit-text-stroke:0.45px #ffffff;transform:scaleX(0.8697);transform-origin:0 0;">SETTINGS</div>
<div class="t" style="left:95.80px;top:395.96px;font-size:26.09px;color:#d4d6d9;letter-spacing:1.23px;">Dashboard</div>
<div class="t" style="left:95.70px;top:458.96px;font-size:26.09px;color:#d4d6d9;letter-spacing:0.81px;">Rejected Report</div>
<div class="t" style="left:96.70px;top:521.36px;font-size:25.65px;color:#d4d6d9;letter-spacing:1.02px;">Suspicious Report</div>
<div class="t" style="left:95.70px;top:584.12px;font-size:26.67px;color:#d4d6d9;letter-spacing:0.93px;">Protected Report</div>
<div class="t" style="left:95.70px;top:646.63px;font-size:25.36px;color:#d4d6d9;letter-spacing:0.78px;">Rules</div>
<div class="t" style="left:96.70px;top:708.42px;font-size:26.67px;color:#d4d6d9;letter-spacing:0.47px;">Settings</div>
<div class="t" style="left:105.50px;top:1649.42px;font-size:26.67px;color:#a9abad;letter-spacing:0.15px;">© Singular 2019</div>
<div class="t" style="left:38.00px;top:1690.77px;font-size:18.26px;color:#a9abad;letter-spacing:0.39px;">Terms and Conditions</div>
<div class="t" style="left:235.50px;top:1691.01px;font-size:18px;color:#a9abad;">|</div>
<div class="t" style="left:254.01px;top:1690.77px;font-size:18.26px;color:#a9abad;transform:scaleX(0.9885);transform-origin:0 0;">Privacy Policy</div>
<div class="t" style="left:477.72px;top:148.84px;font-size:58.55px;color:#1f242b;transform:scaleX(0.9365);transform-origin:0 0;-webkit-text-stroke:1.8px #f1f1f1;">Fraud Dashboard</div>
<div class="t" style="left:547.49px;top:283.09px;font-size:27.25px;color:#4a5462;transform:scaleX(0.9535);transform-origin:0 0;">19 March 2019 - 25 March 2019</div>
<div class="t" style="left:478.80px;top:377.59px;font-size:30.72px;color:#4a5462;transform:scaleX(0.9850);transform-origin:0 0;">Totals</div>
<div class="t" style="left:513.57px;top:463.49px;font-size:26.81px;color:#4a5462;transform:scaleX(0.9665);transform-origin:0 0;">Rejected Installs</div>
<div class="t" style="left:776.03px;top:463.49px;font-size:26.81px;color:#4a5462;transform:scaleX(0.9662);transform-origin:0 0;">Suspicious Installs</div>
<div class="t" style="left:1061.72px;top:463.49px;font-size:26.81px;color:#4a5462;transform:scaleX(0.9892);transform-origin:0 0;">Protected Installs</div>
<div class="t" style="left:1337.96px;top:463.49px;font-size:26.81px;color:#4a5462;transform:scaleX(0.9221);transform-origin:0 0;">Est. Saved Cost</div>
<div class="t" style="left:536.46px;top:503.44px;font-size:59.42px;color:#56a7ea;transform:scaleX(0.9806);transform-origin:0 0;">7,494</div>
<div class="t" style="left:795.93px;top:503.44px;font-size:59.42px;color:#5ccbc4;transform:scaleX(0.9328);transform-origin:0 0;">37,601</div>
<div class="t" style="left:1093.78px;top:503.44px;font-size:59.42px;color:#fdab66;transform:scaleX(0.9604);transform-origin:0 0;">5,710</div>
<div class="t" style="left:1341.54px;top:503.44px;font-size:59.42px;color:#f17776;transform:scaleX(0.9565);transform-origin:0 0;">$ 23,424.23</div>
<div class="t" style="left:477.40px;top:654.46px;font-size:30.43px;color:#4a5462;letter-spacing:0.15px;">Network Summary</div>
<div class="t" style="left:513.78px;top:740.65px;font-size:30.0px;color:#4a5462;transform:scaleX(0.9592);transform-origin:0 0;">Est. Saved Cost Over Time ($ Per Day)</div>
<div class="t" style="left:2037.30px;top:741.09px;font-size:26.81px;color:#4a5462;letter-spacing:0.05px;">Show chart for top</div>
<div class="t" style="left:2294.00px;top:741.16px;font-size:26.52px;color:#4a5462;">5</div>
<div class="t" style="left:2400.98px;top:738.62px;font-size:27.97px;color:#3a8ee0;transform:scaleX(0.9172);transform-origin:0 0;">Show Legend</div>
<div class="t" style="left:522.80px;top:812.16px;font-size:22.61px;color:#a6a6a6;transform:scaleX(0.9538);transform-origin:0 0;">$ 1,000.00</div>
<div class="t" style="left:540.30px;top:842.56px;font-size:22.61px;color:#a6a6a6;transform:scaleX(0.9609);transform-origin:0 0;">$ 900.00</div>
<div class="t" style="left:540.30px;top:875.06px;font-size:22.61px;color:#a6a6a6;transform:scaleX(0.9609);transform-origin:0 0;">$ 800.00</div>
<div class="t" style="left:540.30px;top:907.16px;font-size:22.61px;color:#a6a6a6;transform:scaleX(0.9609);transform-origin:0 0;">$ 700.00</div>
<div class="t" style="left:540.30px;top:937.96px;font-size:22.61px;color:#a6a6a6;transform:scaleX(0.9609);transform-origin:0 0;">$ 600.00</div>
<div class="t" style="left:540.30px;top:969.96px;font-size:22.61px;color:#a6a6a6;transform:scaleX(0.9609);transform-origin:0 0;">$ 500.00</div>
<div class="t" style="left:540.30px;top:1002.56px;font-size:22.61px;color:#a6a6a6;transform:scaleX(0.9609);transform-origin:0 0;">$ 400.00</div>
<div class="t" style="left:540.30px;top:1033.16px;font-size:22.61px;color:#a6a6a6;transform:scaleX(0.9609);transform-origin:0 0;">$ 300.00</div>
<div class="t" style="left:540.30px;top:1065.76px;font-size:22.61px;color:#a6a6a6;transform:scaleX(0.9609);transform-origin:0 0;">$ 200.00</div>
<div class="t" style="left:711.32px;top:1115.03px;font-size:22.75px;color:#a6a6a6;transform:scaleX(0.9892);transform-origin:0 0;">19 Mar, 2019</div>
<div class="t" style="left:985.87px;top:1115.03px;font-size:22.75px;color:#a6a6a6;transform:scaleX(0.9817);transform-origin:0 0;">20 Mar, 2019</div>
<div class="t" style="left:1259.42px;top:1115.03px;font-size:22.75px;color:#a6a6a6;transform:scaleX(0.9817);transform-origin:0 0;">21 Mar, 2019</div>
<div class="t" style="left:1532.97px;top:1115.03px;font-size:22.75px;color:#a6a6a6;transform:scaleX(0.9817);transform-origin:0 0;">22 Mar, 2019</div>
<div class="t" style="left:1806.52px;top:1115.03px;font-size:22.75px;color:#a6a6a6;transform:scaleX(0.9817);transform-origin:0 0;">23 Mar, 2019</div>
<div class="t" style="left:2080.07px;top:1115.03px;font-size:22.75px;color:#a6a6a6;transform:scaleX(0.9817);transform-origin:0 0;">24 Mar, 2019</div>
<div class="t" style="left:2353.62px;top:1115.03px;font-size:22.75px;color:#a6a6a6;transform:scaleX(0.9817);transform-origin:0 0;">25 Mar, 2019</div>
<div class="t" style="left:686.50px;top:1180.96px;font-size:27.39px;color:#777777;-webkit-text-stroke:0.6px #777777;transform:scaleX(0.9698);transform-origin:0 0;">Tracker Clicks</div>
<div class="t" style="left:894.00px;top:1180.96px;font-size:27.39px;color:#777777;-webkit-text-stroke:0.6px #777777;">Tracker Installs</div>
<div class="t" style="left:1117.22px;top:1180.96px;font-size:27.39px;color:#777777;-webkit-text-stroke:0.6px #777777;transform:scaleX(0.9905);transform-origin:0 0;">Rejected Installs</div>
<div class="t" style="left:1354.65px;top:1180.96px;font-size:27.39px;color:#777777;-webkit-text-stroke:0.6px #777777;transform:scaleX(0.9742);transform-origin:0 0;">Rejected Installs (%)</div>
<div class="t" style="left:1637.72px;top:1180.96px;font-size:27.39px;color:#777777;-webkit-text-stroke:0.6px #777777;transform:scaleX(0.9808);transform-origin:0 0;">Suspicious Installs</div>
<div class="t" style="left:1898.63px;top:1180.96px;font-size:27.39px;color:#777777;-webkit-text-stroke:0.6px #777777;transform:scaleX(0.9681);transform-origin:0 0;">Suspicious Installs (%)</div>
<div class="t" style="left:2203.15px;top:1180.96px;font-size:27.39px;color:#222222;-webkit-text-stroke:0.6px #222222;transform:scaleX(0.9267);transform-origin:0 0;">Est. Saved Cost</div>
<div class="t" style="left:580.40px;top:1273.83px;font-size:24.06px;color:#4a5462;letter-spacing:0.20px;-webkit-text-stroke:0.6px #4a5462;">Source</div>
<div class="t" style="left:815.40px;top:1273.83px;font-size:24.06px;color:#4a5462;letter-spacing:0.22px;-webkit-text-stroke:0.6px #4a5462;">Tracker Clicks</div>
<div class="t" style="left:1054.80px;top:1273.83px;font-size:24.06px;color:#4a5462;letter-spacing:0.61px;-webkit-text-stroke:0.6px #4a5462;">Tracker Installs</div>
<div class="t" style="left:1296.50px;top:1273.83px;font-size:24.06px;color:#4a5462;letter-spacing:0.47px;-webkit-text-stroke:0.6px #4a5462;">Rejected Installs</div>
<div class="t" style="left:1536.80px;top:1273.83px;font-size:24.06px;color:#4a5462;letter-spacing:0.23px;-webkit-text-stroke:0.6px #4a5462;">Rejected Installs (%)</div>
<div class="t" style="left:1809.40px;top:1273.83px;font-size:24.06px;color:#4a5462;letter-spacing:0.38px;-webkit-text-stroke:0.6px #4a5462;">Suspicious Installs</div>
<div class="t" style="left:2062.50px;top:1273.83px;font-size:24.06px;color:#4a5462;letter-spacing:0.26px;-webkit-text-stroke:0.6px #4a5462;">Suspicious Installs (%)</div>
<div class="t" style="left:2375.73px;top:1273.83px;font-size:24.06px;color:#4a5462;-webkit-text-stroke:0.6px #4a5462;transform:scaleX(0.9744);transform-origin:0 0;">Est. Saved Cost</div>
<div class="t" style="left:508.00px;top:1334.09px;font-size:26.38px;color:#4a5462;letter-spacing:0.03px;-webkit-text-stroke:0.6px #4a5462;">Total</div>
<div class="t" style="left:907.68px;top:1334.09px;font-size:26.38px;color:#4a5462;-webkit-text-stroke:0.6px #4a5462;transform:scaleX(0.8950);transform-origin:0 0;">931,959</div>
<div class="t" style="left:1155.97px;top:1334.09px;font-size:26.38px;color:#4a5462;-webkit-text-stroke:0.6px #4a5462;transform:scaleX(0.8950);transform-origin:0 0;">125,585</div>
<div class="t" style="left:1429.93px;top:1334.09px;font-size:26.38px;color:#4a5462;-webkit-text-stroke:0.6px #4a5462;transform:scaleX(0.8950);transform-origin:0 0;">7,494</div>
<div class="t" style="left:1696.77px;top:1334.09px;font-size:26.38px;color:#4a5462;-webkit-text-stroke:0.6px #4a5462;transform:scaleX(0.8950);transform-origin:0 0;">5.97%</div>
<div class="t" style="left:1942.60px;top:1334.09px;font-size:26.38px;color:#4a5462;-webkit-text-stroke:0.6px #4a5462;transform:scaleX(0.8950);transform-origin:0 0;">37,601</div>
<div class="t" style="left:2231.14px;top:1334.09px;font-size:26.38px;color:#4a5462;-webkit-text-stroke:0.6px #4a5462;transform:scaleX(0.8950);transform-origin:0 0;">29.94%</div>
<div class="t" style="left:2438.39px;top:1334.09px;font-size:26.38px;color:#4a5462;-webkit-text-stroke:0.6px #4a5462;transform:scaleX(0.8950);transform-origin:0 0;">$ 23,424.23</div>
<div class="t" style="left:506.50px;top:1400.90px;font-size:25.07px;color:#4a5462;">Inmobi</div>
<div class="t" style="left:906.75px;top:1400.90px;font-size:25.07px;color:#4a5462;transform:scaleX(0.9550);transform-origin:0 0;">126,215</div>
<div class="t" style="left:1168.42px;top:1400.90px;font-size:25.07px;color:#4a5462;transform:scaleX(0.9550);transform-origin:0 0;">15,253</div>
<div class="t" style="left:1429.79px;top:1400.90px;font-size:25.07px;color:#4a5462;transform:scaleX(0.9550);transform-origin:0 0;">1,679</div>
<div class="t" style="left:1684.69px;top:1400.90px;font-size:25.07px;color:#4a5462;transform:scaleX(0.9550);transform-origin:0 0;">11.01%</div>
<div class="t" style="left:1954.99px;top:1400.90px;font-size:25.07px;color:#4a5462;transform:scaleX(0.9550);transform-origin:0 0;">7,662</div>
<div class="t" style="left:2230.58px;top:1400.90px;font-size:25.07px;color:#4a5462;transform:scaleX(0.9550);transform-origin:0 0;">50.23%</div>
<div class="t" style="left:2450.11px;top:1400.90px;font-size:25.07px;color:#4a5462;transform:scaleX(0.9550);transform-origin:0 0;">$ 5,219.36</div>
<div class="t" style="left:506.50px;top:1470.90px;font-size:25.07px;color:#4a5462;">Mdotm</div>
<div class="t" style="left:910.57px;top:1470.90px;font-size:25.07px;color:#4a5462;transform:scaleX(0.9550);transform-origin:0 0;">111,720</div>
<div class="t" style="left:1168.42px;top:1470.90px;font-size:25.07px;color:#4a5462;transform:scaleX(0.9550);transform-origin:0 0;">13,773</div>
<div class="t" style="left:1448.89px;top:1470.90px;font-size:25.07px;color:#7b7b7b;transform:scaleX(0.9550);transform-origin:0 0;">N/A</div>
<div class="t" style="left:1722.89px;top:1470.90px;font-size:25.07px;color:#7b7b7b;transform:scaleX(0.9550);transform-origin:0 0;">N/A</div>
<div class="t" style="left:1974.09px;top:1470.90px;font-size:25.07px;color:#7b7b7b;transform:scaleX(0.9550);transform-origin:0 0;">N/A</div>
<div class="t" style="left:2270.69px;top:1470.90px;font-size:25.07px;color:#7b7b7b;transform:scaleX(0.9550);transform-origin:0 0;">N/A</div>
<div class="t" style="left:2522.69px;top:1470.90px;font-size:25.07px;color:#7b7b7b;transform:scaleX(0.9550);transform-origin:0 0;">N/A</div>
<div class="t" style="left:508.50px;top:1540.90px;font-size:25.07px;color:#4a5462;">Vungle</div>
<div class="t" style="left:906.75px;top:1540.90px;font-size:25.07px;color:#4a5462;transform:scaleX(0.9550);transform-origin:0 0;">104,706</div>
<div class="t" style="left:1168.42px;top:1540.90px;font-size:25.07px;color:#4a5462;transform:scaleX(0.9550);transform-origin:0 0;">13,070</div>
<div class="t" style="left:1448.89px;top:1540.90px;font-size:25.07px;color:#7b7b7b;transform:scaleX(0.9550);transform-origin:0 0;">N/A</div>
<div class="t" style="left:1722.89px;top:1540.90px;font-size:25.07px;color:#7b7b7b;transform:scaleX(0.9550);transform-origin:0 0;">N/A</div>
<div class="t" style="left:1974.09px;top:1540.90px;font-size:25.07px;color:#7b7b7b;transform:scaleX(0.9550);transform-origin:0 0;">N/A</div>
<div class="t" style="left:2270.69px;top:1540.90px;font-size:25.07px;color:#7b7b7b;transform:scaleX(0.9550);transform-origin:0 0;">N/A</div>
<div class="t" style="left:2522.69px;top:1540.90px;font-size:25.07px;color:#7b7b7b;transform:scaleX(0.9550);transform-origin:0 0;">N/A</div>
<div class="t" style="left:507.50px;top:1610.90px;font-size:25.07px;color:#4a5462;">ironSource</div>
<div class="t" style="left:906.75px;top:1610.90px;font-size:25.07px;color:#4a5462;transform:scaleX(0.9550);transform-origin:0 0;">101,712</div>
<div class="t" style="left:1168.42px;top:1610.90px;font-size:25.07px;color:#4a5462;transform:scaleX(0.9550);transform-origin:0 0;">12,712</div>
<div class="t" style="left:1448.89px;top:1610.90px;font-size:25.07px;color:#7b7b7b;transform:scaleX(0.9550);transform-origin:0 0;">N/A</div>
<div class="t" style="left:1722.89px;top:1610.90px;font-size:25.07px;color:#7b7b7b;transform:scaleX(0.9550);transform-origin:0 0;">N/A</div>
<div class="t" style="left:1974.09px;top:1610.90px;font-size:25.07px;color:#7b7b7b;transform:scaleX(0.9550);transform-origin:0 0;">N/A</div>
<div class="t" style="left:2270.69px;top:1610.90px;font-size:25.07px;color:#7b7b7b;transform:scaleX(0.9550);transform-origin:0 0;">N/A</div>
<div class="t" style="left:2522.69px;top:1610.90px;font-size:25.07px;color:#7b7b7b;transform:scaleX(0.9550);transform-origin:0 0;">N/A</div>
<div class="t" style="left:508.50px;top:1680.90px;font-size:25.07px;color:#4a5462;">AdWords</div>
<div class="t" style="left:920.12px;top:1680.90px;font-size:25.07px;color:#4a5462;transform:scaleX(0.9550);transform-origin:0 0;">68,550</div>
<div class="t" style="left:1168.42px;top:1680.90px;font-size:25.07px;color:#4a5462;transform:scaleX(0.9550);transform-origin:0 0;">12,271</div>
<div class="t" style="left:1429.79px;top:1680.90px;font-size:25.07px;color:#4a5462;transform:scaleX(0.9550);transform-origin:0 0;">1,228</div>
<div class="t" style="left:1682.78px;top:1680.90px;font-size:25.07px;color:#4a5462;transform:scaleX(0.9550);transform-origin:0 0;">10.01%</div>
<div class="t" style="left:1954.99px;top:1680.90px;font-size:25.07px;color:#4a5462;transform:scaleX(0.9550);transform-origin:0 0;">6,208</div>
<div class="t" style="left:2230.58px;top:1680.90px;font-size:25.07px;color:#4a5462;transform:scaleX(0.9550);transform-origin:0 0;">50.59%</div>
<div class="t" style="left:2451.07px;top:1680.90px;font-size:25.07px;color:#4a5462;transform:scaleX(0.9550);transform-origin:0 0;">$ 3,928.17</div>
<!-- scrollbar -->
<div class="abs" style="left:2634px;top:0;width:28px;height:1738px;background:#f7f7f7;border-left:1px solid #e2e2e2;box-sizing:border-box"></div>
<div class="abs" style="left:2640px;top:4px;width:22px;height:1004px;background:#7b7b7b;border-radius:11px"></div>
<div class="abs" style="left:2634px;top:0;width:6px;height:90px;background:#cadcf1"></div><div class="abs" style="left:2640px;top:4px;width:22px;height:86px;background:#666e7a;border-radius:11px 11px 0 0"></div>
</body></html>
